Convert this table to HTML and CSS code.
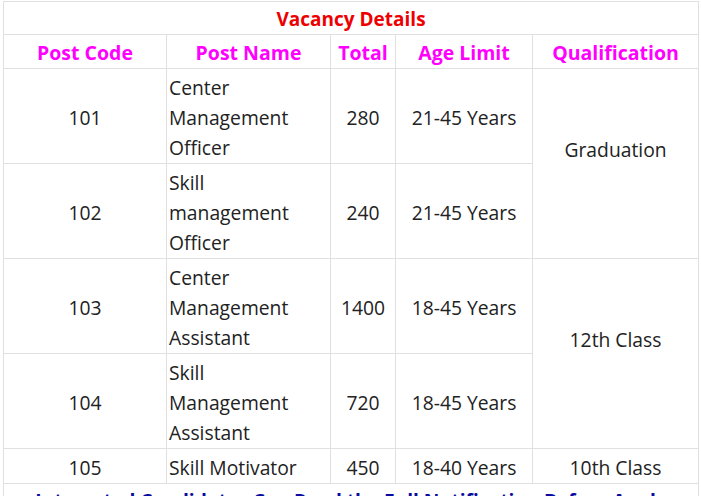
FILE: index.html
```html
<!DOCTYPE html>
<html lang="en">
<head>
<meta charset="utf-8">
<title>Vacancy Details</title>
<link rel="stylesheet" href="styles.css">
</head>
<body>
<table class="vacancy">
  <colgroup>
    <col class="c-code">
    <col class="c-name">
    <col class="c-total">
    <col class="c-age">
    <col class="c-qual">
  </colgroup>
  <tr><th class="title" colspan="5">Vacancy Details</th></tr>
  <tr class="head">
    <th>Post Code</th><th>Post Name</th><th>Total</th><th>Age Limit</th><th>Qualification</th>
  </tr>
  <tr>
    <td>101</td><td class="name">Center Management Officer</td><td>280</td><td>21-45 Years</td>
    <td class="qual" rowspan="2">Graduation</td>
  </tr>
  <tr>
    <td>102</td><td class="name">Skill management Officer</td><td>240</td><td>21-45 Years</td>
  </tr>
  <tr>
    <td>103</td><td class="name">Center Management Assistant</td><td>1400</td><td>18-45 Years</td>
    <td class="qual" rowspan="2">12th Class</td>
  </tr>
  <tr>
    <td>104</td><td class="name">Skill Management Assistant</td><td>720</td><td>18-45 Years</td>
  </tr>
  <tr>
    <td>105</td><td class="name">Skill Motivator</td><td>450</td><td>18-40 Years</td><td>10th Class</td>
  </tr>
  <tr><td class="note" colspan="5">Interested Candidates Can Read the Full Notification Before Apply</td></tr>
</table>
</body>
</html>
```

FILE: styles.css
```css
html, body {
  margin: 0;
  padding: 0;
  background: #ffffff;
}
body {
  font-family: "Open Sans", "Noto Sans", sans-serif;
  color: #222222;
  overflow: hidden;
}
.vacancy {
  margin: 1px 0 0 3px;
  width: 695px;
  border-collapse: collapse;
  table-layout: fixed;
  font-size: 19.3px;
}
.c-code { width: 163px; }
.c-name { width: 164px; }
.c-total { width: 65px; }
.c-age { width: 137px; }
.c-qual { width: 166px; }
.vacancy th,
.vacancy td {
  border: 1px solid #e0e0e0;
  padding: 4px 2px 0;
  line-height: 30px;
  text-align: center;
  vertical-align: middle;
}
.vacancy th {
  font-weight: 700;
  font-size: 19.5px;
  padding-top: 3px;
  padding-bottom: 1px;
}
.vacancy .title {
  color: #ee0000;
  font-size: 19px;
  line-height: 28px;
}
.head th {
  color: #ff00ff;
  line-height: 29px;
}
.vacancy .name {
  text-align: left;
  padding-right: 6px;
}
.vacancy .qual {
  padding-bottom: 32px;
}
.vacancy .note {
  color: #0a0aa0;
  font-weight: 700;
  font-size: 19.2px;
  line-height: 28px;
  padding-top: 3px;
}
```
